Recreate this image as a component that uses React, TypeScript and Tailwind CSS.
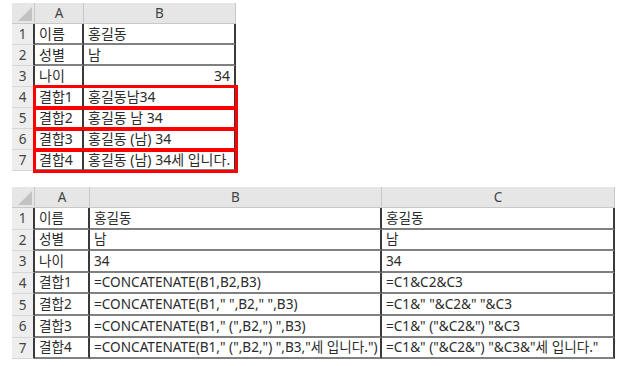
import React from "react";

const FONT = { fontFamily: '"Noto Sans", "Noto Sans CJK KR", sans-serif' };

function Corner() {
  return (
    <div className="relative h-full w-full bg-[#e6e6e6] border-r border-b border-[#c8c8c8]">
      <svg className="absolute right-[2px] bottom-[2px]" width="14" height="14" viewBox="0 0 14 14">
        <polygon points="14,0 14,14 0,14" fill="#c2c2c2" />
      </svg>
    </div>
  );
}

function Head({ children }: { children: React.ReactNode }) {
  return (
    <div className="flex h-full items-center justify-center bg-[#e6e6e6] border-r border-b border-[#c8c8c8] text-[13.5px] text-[#444]">
      {children}
    </div>
  );
}

function RowNum({ n }: { n: number }) {
  return (
    <div className="flex h-full items-center justify-center bg-[#eeeeee] border-b border-[#d6d6d6] border-r-2 border-r-[#3a3a3a] text-[13.5px] text-[#444]">
      {n}
    </div>
  );
}

function Cell({ children, right, big }: { children?: React.ReactNode; right?: boolean; big?: boolean }) {
  return (
    <div
      className={`flex h-full items-center overflow-hidden whitespace-nowrap border-b-2 border-b-[#808080] border-r-2 border-r-[#3a3a3a] px-[4px] text-[#2b2b2b] ${
        right ? "justify-end" : ""
      } ${big ? "text-[14px]" : "text-[13.6px]"}`}
    >
      {children}
    </div>
  );
}

const topRows: [string, string, boolean][] = [
  ["이름", "홍길동", false],
  ["성별", "남", false],
  ["나이", "34", true],
  ["결합1", "홍길동남34", false],
  ["결합2", "홍길동 남 34", false],
  ["결합3", "홍길동 (남) 34", false],
  ["결합4", "홍길동 (남) 34세 입니다.", false],
];

const bottomRows: [string, string, string][] = [
  ["이름", "홍길동", "홍길동"],
  ["성별", "남", "남"],
  ["나이", "34", "34"],
  ["결합1", "=CONCATENATE(B1,B2,B3)", "=C1&C2&C3"],
  ["결합2", '=CONCATENATE(B1," ",B2," ",B3)', '=C1&" "&C2&" "&C3'],
  ["결합3", '=CONCATENATE(B1," (",B2,") ",B3)', '=C1&" ("&C2&") "&C3'],
  ["결합4", '=CONCATENATE(B1," (",B2,") ",B3,"세 입니다.")', '=C1&" ("&C2&") "&C3&"세 입니다."'],
];

export default function App() {
  return (
    <div className="h-[366px] w-[635px] overflow-hidden bg-white" style={FONT}>
      <div className="pl-[12px] pt-[3px]">
        <div className="w-[224px]">
          <div className="grid h-[21px] grid-cols-[23px_49px_152px]">
            <Corner />
            <Head>A</Head>
            <Head>B</Head>
          </div>
          {topRows.map(([a, b, r], i) => (
            <div key={i} className="flex h-[21px]">
              <div className="w-[23px]">
                <RowNum n={i + 1} />
              </div>
              <div
                className={`grid w-[201px] grid-cols-[49px_152px] ${
                  i >= 3 ? "outline-[3px] outline-solid outline-[#fe0000] -outline-offset-1" : ""
                }`}
              >
                <Cell big>{a}</Cell>
                <Cell right={r} big>
                  {b}
                </Cell>
              </div>
            </div>
          ))}
        </div>
      </div>

      <div className="pl-[12px] pt-[16px]">
        <div className="w-[603px]">
          <div className="grid h-[21px] grid-cols-[23px_55px_292px_233px]">
            <Corner />
            <Head>A</Head>
            <Head>B</Head>
            <Head>C</Head>
          </div>
          {bottomRows.map(([a, b, c], i) => (
            <div key={i} className="grid h-[21.6px] grid-cols-[23px_55px_292px_233px]">
              <RowNum n={i + 1} />
              <Cell>{a}</Cell>
              <Cell>{b}</Cell>
              <Cell>{c}</Cell>
            </div>
          ))}
        </div>
      </div>
    </div>
  );
}
